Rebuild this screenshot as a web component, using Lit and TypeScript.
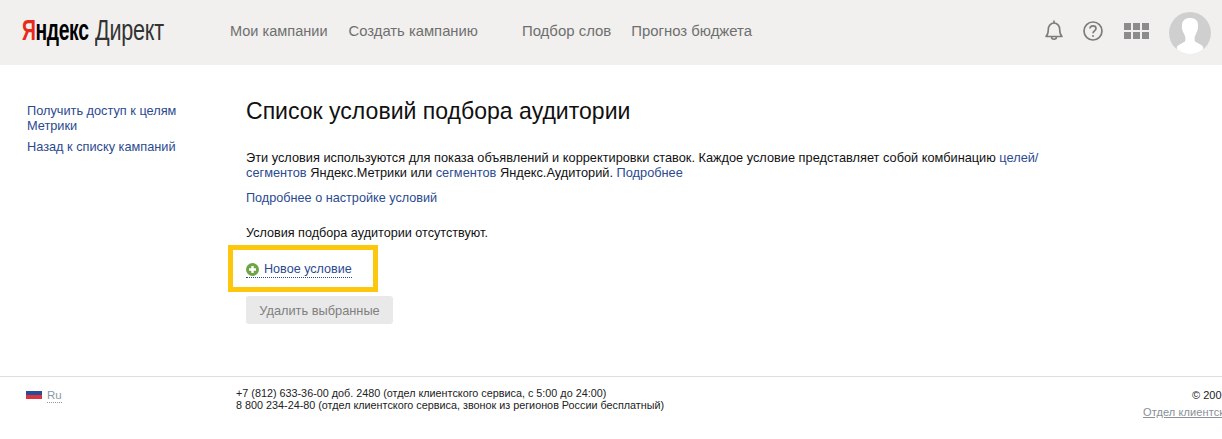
import { LitElement, html, css } from "lit";
import { customElement } from "lit/decorators.js";

@customElement("app-root")
export class AppRoot extends LitElement {
  static styles = css`
    :host { display: block; width: 1222px; height: 439px; overflow: hidden; background: #fff; font-family: "Liberation Sans", Arial, sans-serif; color: #000; }
    a { color: #2b4a8f; text-decoration: none; }
    header { height: 65px; background: #f1f0ee; display: flex; align-items: center; }
    .logo { width: 230px; padding: 0 0 5px 22px; box-sizing: border-box; flex: none; font-size: 30px; line-height: 30px; white-space: nowrap; color: #333; display: flex; }
    .brand { display: block; width: 72.500px; font-weight: 700; color: #000; transform: scaleX(0.645); transform-origin: left center; letter-spacing: -0.6px; }
    .brand i { font-style: normal; color: #e8291c; }
    .prod { display: block; transform: scaleX(0.72); transform-origin: left center; font-weight: 400; letter-spacing: -0.3px; }
    nav { display: flex; align-items: baseline; color: #6f6f6f; flex: none; padding-bottom: 4px; }
    nav span { white-space: nowrap; line-height: 17px; }
    .n1 { margin-right: 21px; font-size: 14.55px; }
    .n2 { margin-right: 44px; font-size: 14.8px; }
    .n3 { margin-right: 20px; font-size: 14.95px; }
    .n4 { font-size: 14.9px; }
    .icons { margin-left: auto; display: flex; align-items: center; padding-right: 11px; }
    .bell { margin-right: 20px; margin-bottom: 4px; }
    .help { margin-right: 21px; margin-bottom: 4px; }
    .apps { margin-right: 20px; margin-bottom: 4px; }
    svg { display: block; }
    .body { display: flex; height: 311px; border-bottom: 1px solid #dedede; box-sizing: content-box; }
    .side { width: 246px; flex: none; box-sizing: border-box; padding: 38px 0 0 27px; font-size: 12.75px; line-height: 15px; }
    .side a { display: block; width: 165px; margin-bottom: 6px; }
    main { flex: 1; min-width: 0; }
    h1 { margin: 33px 0 0; font-weight: 400; font-size: 23.05px; line-height: 26px; color: #111; }
    .desc { margin: 26px 0 0; width: 800px; font-size: 12.78px; line-height: 15px; color: #111; }
    .more { display: block; margin-top: 11px; font-size: 12.67px; line-height: 15px; }
    .empty { margin: 20px 0 0; font-size: 12.63px; line-height: 15px; color: #111; }
    .hl { margin: 4px 0 0 -18px; width: 150px; height: 47px; border: 5px solid #fdc70d; display: flex; align-items: center; padding-left: 13px; box-sizing: border-box; }
    .add { display: flex; align-items: center; gap: 5px; font-size: 12.6px; line-height: 15px; border-bottom: 1px dotted #2b4a8f; margin-top: 2px; }
    .del { margin-top: 4px; width: 147px; height: 28px; border-radius: 3px; background: #e9e9e9; color: #7f7f7f; font-size: 12.8px; display: flex; align-items: center; justify-content: center; }
    footer { display: flex; font-size: 10.8px; line-height: 12px; padding-top: 10px; position: relative; }
    .lang { width: 236px; flex: none; box-sizing: border-box; padding: 1px 0 0 26px; display: flex; gap: 5px; align-items: flex-start; }
    .flag { width: 16px; height: 8px; margin-top: 3px; background: linear-gradient(#2c4a9a 0 50%, #d9343f 50%); flex: none; }
    .ru { color: #8a9aa5; border-bottom: 1px dotted #8a9aa5; font-size: 11.5px; line-height: 14px; }
    .phones { color: #222; white-space: nowrap; }
    .legal { margin-left: auto; width: 79px; flex: none; white-space: nowrap; overflow: hidden; color: #222; font-size: 11px; padding-top: 1px; }
    .legal div { padding-left: 49px; line-height: 14px; }
    .legal a { display: block; margin-top: 4px; line-height: 13px; color: #8a8f98; text-decoration: underline; letter-spacing: 0.1px; }
  `;

  render() {
    return html`
      <header>
        <div class="logo"><span class="brand"><i>Я</i>ндекс</span><span class="prod">Директ</span></div>
        <nav>
          <span class="n1">Мои кампании</span>
          <span class="n2">Создать кампанию</span>
          <span class="n3">Подбор слов</span>
          <span class="n4">Прогноз бюджета</span>
        </nav>
        <div class="icons">
          <svg class="bell" width="18" height="21" viewBox="0 0 18 21" fill="none" stroke="#7c7c7c" stroke-width="1.6">
            <path d="M1 16.500c1.800-1.700 2.300-3.300 2.300-7C3.300 5.800 5.800 3 9 3s5.700 2.800 5.700 6.500c0 3.700.5 5.300 2.300 7z" stroke-linejoin="round"/>
            <path d="M9 .6V3"/><path d="M6.500 16.800a2.500 2.500 0 0 0 5 0"/>
          </svg>
          <svg class="help" width="20" height="20" viewBox="0 0 20 20" fill="none" stroke="#7c7c7c" stroke-width="1.7">
            <circle cx="10" cy="10" r="9"/>
            <path d="M7 7.600c0-1.800 1.400-2.800 3-2.800s3 1 3 2.600c0 2.400-3 2.400-3 4.800"/>
            <circle cx="10" cy="15" r="1" fill="#7c7c7c" stroke="none"/>
          </svg>
          <svg class="apps" width="25" height="16" viewBox="0 0 25 16" fill="#8c8c8c">
            <rect x="0" y="0" width="7" height="7"/><rect x="9" y="0" width="7" height="7"/><rect x="18" y="0" width="7" height="7"/>
            <rect x="0" y="9" width="7" height="7"/><rect x="9" y="9" width="7" height="7"/><rect x="18" y="9" width="7" height="7"/>
          </svg>
          <svg width="42" height="42" viewBox="0 0 42 42">
            <defs><clipPath id="av"><circle cx="21" cy="21" r="21"/></clipPath></defs>
            <circle cx="21" cy="21" r="21" fill="#cfcfcf"/>
            <g clip-path="url(#av)" fill="#fff">
              <path d="M21 6c5 0 8 2.500 8 6.500 0 2.500.2 4-.8 6.500-.6 1.500-1.200 3-2 4.500-.8 1.600-.8 4.500-.2 6 2 1.500 6 2.500 8 5L35 45H7l1-10.500c2-2.500 6-3.500 8-5 .6-1.500.6-4.400-.2-6-1-2-1.800-3.500-2.300-5-.8-2-.7-4-.5-6C13.500 8.500 16 6 21 6z"/>
            </g>
          </svg>
        </div>
      </header>
      <div class="body">
        <div class="side">
          <a>Получить доступ к целям Метрики</a>
          <a>Назад к списку кампаний</a>
        </div>
        <main>
          <h1>Список условий подбора аудитории</h1>
          <p class="desc">Эти условия используются для показа объявлений и корректировки ставок. Каждое условие представляет собой комбинацию <a>целей/</a><br /><a>сегментов</a> Яндекс.Метрики или <a>сегментов</a> Яндекс.Аудиторий. <a>Подробнее</a></p>
          <a class="more">Подробнее о настройке условий</a>
          <p class="empty">Условия подбора аудитории отсутствуют.</p>
          <div class="hl">
            <a class="add">
              <svg width="13" height="13" viewBox="0 0 13 13"><circle cx="6.500" cy="6.500" r="6.500" fill="#6da544"/><path d="M6.500 3v7M3 6.500h7" stroke="#fff" stroke-width="2.400"/></svg>
              Новое условие
            </a>
          </div>
          <div class="del">Удалить выбранные</div>
        </main>
      </div>
      <footer>
        <div class="lang"><span class="flag"></span><span class="ru">Ru</span></div>
        <div class="phones">+7 (812) 633-36-00 доб. 2480 (отдел клиентского сервиса, с 5:00 до 24:00)<br />8 800 234-24-80 (отдел клиентского сервиса, звонок из регионов России бесплатный)</div>
        <div class="legal"><div>© 2001–2017</div><a>Отдел клиентского сервиса</a></div>
      </footer>
    `;
  }
}
